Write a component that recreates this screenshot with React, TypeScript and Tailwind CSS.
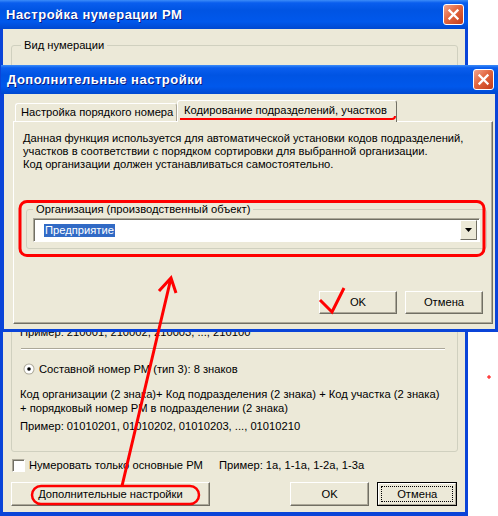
import React from "react";

function CloseButton() {
  return (
    <div className="w-[21px] h-[21px] rounded-[3px] border border-white bg-[linear-gradient(135deg,#F2A58E_0%,#E2663F_45%,#C33C1A_100%)] flex items-center justify-center">
      <svg width="13" height="13" viewBox="0 0 13 13">
        <path d="M2.5 2.5 L10.5 10.5 M10.5 2.5 L2.5 10.5" stroke="white" strokeWidth="2.3" strokeLinecap="square" />
      </svg>
    </div>
  );
}

function TitleBar({ title }: { title: string }) {
  return (
    <div className="h-[29px] shrink-0 flex items-center justify-between pl-[6px] pr-[4px] bg-[linear-gradient(180deg,#3C8CF8_0%,#0A5EEE_10%,#0054E3_35%,#0058EC_75%,#0048D0_100%)]">
      <span className="text-white font-['Liberation_Sans',Arial,sans-serif] font-bold text-[13px] [text-shadow:1px_1px_#0A1C83] tracking-[0.5px]">
        {title}
      </span>
      <CloseButton />
    </div>
  );
}

function Btn({
  children,
  className = "",
  isDefault = false,
}: {
  children: React.ReactNode;
  className?: string;
  isDefault?: boolean;
}) {
  if (isDefault) {
    return (
      <button className={`border border-black bg-[#ECE9D8] p-0 ${className}`}>
        <div className="w-full h-full border-t border-l border-white border-r border-b border-r-[#ACA899] border-b-[#ACA899] flex items-center justify-center p-[2px]">
          <div className="w-full h-full border border-dotted border-black flex items-center justify-center">
            {children}
          </div>
        </div>
      </button>
    );
  }
  return (
    <button
      className={`bg-[#ECE9D8] border-t border-l border-white border-b border-r border-b-[#716F64] border-r-[#716F64] shadow-[inset_-1px_-1px_#ACA899] flex items-center justify-center ${className}`}
    >
      {children}
    </button>
  );
}

function Radio() {
  return (
    <svg width="12" height="12" viewBox="0 0 12 12">
      <circle cx="6" cy="6" r="5.5" fill="#ACA899" />
      <circle cx="6" cy="6" r="4.5" fill="white" />
      <circle cx="6" cy="6" r="1.8" fill="black" />
    </svg>
  );
}

function RadioOption({ label }: { label: string }) {
  return (
    <div className="flex items-center h-[14px] ml-[3px]">
      <Radio />
      <span className="ml-[4px]">{label}</span>
    </div>
  );
}

export default function App() {
  return (
    <div className="relative w-[498px] h-[516px] bg-white overflow-hidden text-[11.2px] leading-[13px] text-black font-['Liberation_Sans',Arial,sans-serif]">
      {/* main window */}
      <div className="absolute left-0 top-0 w-[468px] h-[516px] rounded-t-[7px] bg-[#0A44D8] flex flex-col pb-[4px]">
        <TitleBar title="Настройка нумерации РМ" />
        <div className="flex-1 mx-[3px] bg-[#ECE9D8] px-[8px] pt-[9px]">
          <fieldset className="h-[414px] w-[447px] border border-[#D0D0BF] rounded-[3px] px-[8px]">
            <legend className="ml-[1px] px-[3px] leading-[14px]">Вид нумерации</legend>
            {/* options 1 and 2 sit under the dialog on top */}
            <div className="h-[274px]" />
            <div>Пример: 210001, 210002, 210003, ..., 210100</div>
            <div className="mt-[9px] w-[424px] ml-[1px] h-[2px] border-t border-[#ACA899] border-b border-b-white" />
            <div className="mt-[12px]">
              <RadioOption label="Составной номер РМ (тип 3): 8 знаков" />
            </div>
            <div className="mt-[12px] leading-[13.5px]">
              <div>Код организации (2 знака)+ Код подразделения (2 знака) + Код участка (2 знака)</div>
              <div>+ порядковый номер РМ в подразделении (2 знака)</div>
            </div>
            <div className="mt-[5px]">Пример: 01010201, 01010202, 01010203, ..., 01010210</div>
          </fieldset>
          <div className="mt-[7px] flex items-center h-[13px]">
            <div className="w-[208px] flex items-center">
              <div className="ml-[1px] w-[13px] h-[13px] bg-white border-t border-l border-[#ACA899] border-b border-r border-b-white border-r-white shadow-[inset_1px_1px_#716F64]" />
              <span className="ml-[4px]">Нумеровать только основные РМ</span>
            </div>
            <span>Пример: 1а, 1-1а, 1-2а, 1-3а</span>
          </div>
          <div className="mt-[10px] flex">
            <Btn className="w-[200px] h-[24px]">Дополнительные настройки</Btn>
            <Btn className="ml-[80px] w-[80px] h-[24px]">OK</Btn>
            <Btn isDefault className="ml-[8px] w-[80px] h-[24px]">
              Отмена
            </Btn>
          </div>
        </div>
      </div>

      {/* additional settings window */}
      <div className="absolute left-[1px] top-[65px] w-[497px] h-[267px] rounded-t-[7px] bg-[#0A44D8] flex flex-col pb-[3px]">
        <TitleBar title="Дополнительные настройки" />
        <div className="flex-1 mx-[3px] bg-[#ECE9D8] pt-[6px] pl-[9px]">
          <div className="flex items-end ml-[2px]">
            <div className="w-[162px] h-[18px] border-t border-l border-white border-r border-r-[#ACA899] rounded-t-[3px] flex items-center pl-[5px]">
              Настройка порядкого номера
            </div>
            <div className="relative z-10 -mb-[1px] w-[220px] h-[22px] bg-[#ECE9D8] border-t border-l border-white border-r border-r-[#716F64] rounded-t-[3px] flex items-center pl-[6px] pb-[2px]">
              Кодирование подразделений, участков
            </div>
          </div>
          <div className="w-[480px] h-[203px] border-t border-l border-white border-b border-r border-b-[#716F64] border-r-[#716F64] shadow-[inset_-1px_-1px_#ACA899] pt-[10px] px-[9px]">
            <div>
              <div>Данная функция используется для автоматической установки кодов подразделений,</div>
              <div>участков в соответствии с порядком сортировки для выбранной организации.</div>
              <div>Код организации должен устанавливаться самостоятельно.</div>
            </div>
            <fieldset className="mt-[31px] ml-[3px] w-[455px] h-[47px] border border-[#D0D0BF] rounded-[3px] px-[6px]">
              <legend className="px-[3px] leading-[14px]">Организация (производственный объект)</legend>
              <div className="mt-[2px] w-[447px] h-[24px] bg-white border-t border-l border-[#ACA899] border-b border-r border-b-white border-r-white shadow-[inset_1px_1px_#716F64] flex items-center justify-between pl-[10px] pr-[2px]">
                <span className="bg-[#316AC5] text-white px-[1px] leading-[13px]">Предприятие</span>
                <div className="w-[17px] h-[20px] bg-[#ECE9D8] border-t border-l border-white border-b border-r border-b-[#716F64] border-r-[#716F64] flex items-center justify-center">
                  <svg width="7" height="4" viewBox="0 0 7 4">
                    <path d="M0 0 H7 L3.5 4 Z" fill="black" />
                  </svg>
                </div>
              </div>
            </fieldset>
            <div className="mt-[42px] ml-[296px] flex gap-[8px]">
              <Btn className="w-[80px] h-[23px]">OK</Btn>
              <Btn className="w-[80px] h-[23px]">Отмена</Btn>
            </div>
          </div>
        </div>
      </div>

      {/* red annotations */}
      <svg className="absolute left-0 top-0 z-20 pointer-events-none" width="498" height="516" viewBox="0 0 498 516" fill="none">
        <path d="M180 119 H392 Q395 119 395 116" stroke="#FF0000" strokeWidth="2" />
        <rect x="20" y="201.5" width="464" height="54" rx="7" stroke="#FF0000" strokeWidth="3" />
        <path d="M122 486 L171 278 M159 291 L171 278 L176 293" stroke="#FF0000" strokeWidth="3" />
        <path d="M320 300 L332 312 L344 288" stroke="#FF0000" strokeWidth="3" />
        <rect x="32" y="486" width="167" height="18" rx="9" stroke="#FF0000" strokeWidth="2.5" />
        <path d="M489 375 V379 M487 377 H491" stroke="#FF0000" strokeWidth="1" />
      </svg>
    </div>
  );
}
